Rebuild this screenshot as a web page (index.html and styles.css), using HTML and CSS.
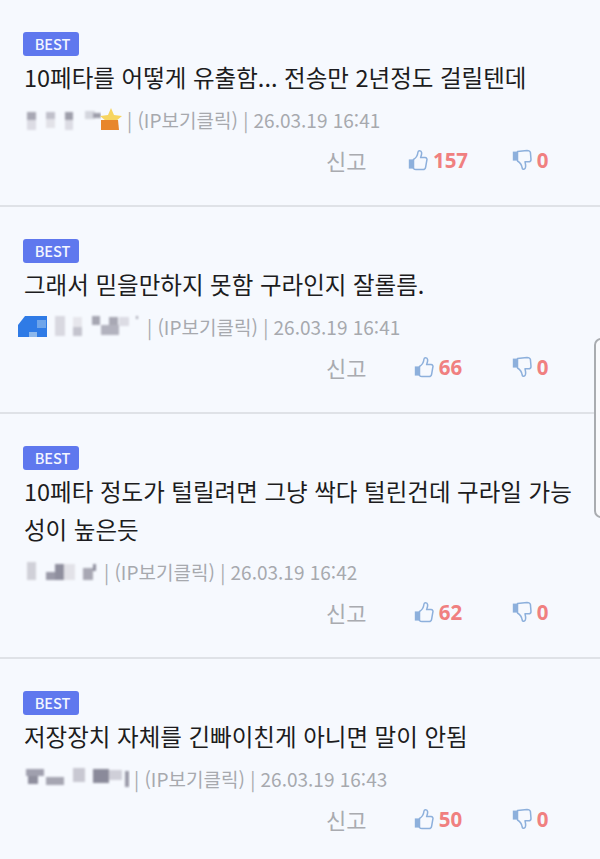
FILE: index.html
```html
<!DOCTYPE html>
<html lang="ko">
<head>
  <meta charset="UTF-8">
  <title>댓글</title>
  <link rel="stylesheet" href="styles.css">
</head>
<body>
  <svg class="defs" width="0" height="0">
    <defs>
      <filter id="pixelBlur"><feGaussianBlur stdDeviation="0.8"/></filter>
      <symbol id="thumbUp" viewBox="0 0 20 22">
        <path class="thumb-line" d="M5.5 10.5 C8 9 9.6 6.5 10 3 C10.2 1.4 13.2 1 13.6 3.6 C13.9 5.6 13 7.2 12.6 8.6 L17 8.6 C18.8 8.6 19.3 10.2 18.8 11.4 L17.6 18.4 C17.3 20 16.2 20.6 15 20.6 L8 20.6 C6.8 20.6 6 20 5.5 19.4 Z"/>
        <path class="thumb-fill" d="M0.8 10.4 H5.5 V19.6 H0.8 Z"/>
      </symbol>
      <symbol id="thumbDown" viewBox="0 0 20 22">
        <path class="thumb-line" d="M5.5 2.4 L15 1.4 C16.6 1.4 18 2 18.4 3.4 L19 10.4 C19 12 18 12.8 16.6 12.8 L13 12.8 C13.4 14.4 13.8 16 13.6 18 C13.3 20.6 10.6 21 10.2 19 C9.8 16 8.2 13.6 5.5 12 Z"/>
        <path class="thumb-fill" d="M0.8 2.6 H5.5 V11.6 H0.8 Z"/>
      </symbol>
    </defs>
  </svg>

  <div class="comment">
    <span class="badge">BEST</span>
    <p class="text">10페타를 어떻게 유출함... 전송만 2년정도 걸릴텐데</p>
    <div class="meta">
      <svg class="nick" width="78" height="26" viewBox="0 0 78 26">
        <g filter="url(#pixelBlur)">
          <rect x="4" y="6" width="9" height="8" fill="#a8a8b4"/>
          <rect x="4" y="14" width="9" height="10" fill="#dcdce4"/>
          <rect x="23" y="6" width="9" height="7" fill="#c0c0ca"/>
          <rect x="23" y="13" width="9" height="9" fill="#e2e2e8"/>
          <rect x="42" y="6" width="8" height="8" fill="#9e9eaa"/>
          <rect x="42" y="14" width="8" height="10" fill="#dcdce4"/>
          <rect x="62" y="5" width="10" height="8" fill="#d4d6de"/>
          <rect x="70" y="7" width="8" height="5" fill="#9e9eaa"/>
        </g>
      </svg>
      <svg class="level" width="24" height="24" viewBox="0 0 24 24">
        <path d="M12 1 L15 8 L23 9 L17 14 L19 21 L12 17 L5 21 L7 14 L1 9 L9 8 Z" fill="#f7d560"/>
        <path d="M2 13 L19 13 L20 23 L2 23 Z" fill="#e8862c"/>
      </svg>
      <span class="info">| (IP보기클릭) | 26.03.19 16:41</span>
    </div>
    <div class="actions">
      <span class="report">신고</span>
      <span class="vote up"><svg class="thumb"><use href="#thumbUp"/></svg>157</span>
      <span class="vote down"><svg class="thumb"><use href="#thumbDown"/></svg>0</span>
    </div>
  </div>

  <div class="comment">
    <span class="badge">BEST</span>
    <p class="text">그래서 믿을만하지 못함 구라인지 잘롤름.</p>
    <div class="meta meta-icon">
      <svg class="level" width="32" height="26" viewBox="0 0 32 26">
        <path d="M1 12 L8 3 H30 V24 H1 Z" fill="#2f7be6"/>
        <rect x="12" y="19" width="8" height="5" fill="#8db8ec"/>
        <rect x="20" y="7" width="9" height="8" fill="#6fa5ea"/>
      </svg>
      <svg class="nick" width="90" height="26" viewBox="0 0 90 26">
        <g filter="url(#pixelBlur)">
          <rect x="2" y="3" width="10" height="20" fill="#d8d8e0"/>
          <rect x="20" y="4" width="9" height="10" fill="#e6e6ec"/>
          <rect x="20" y="14" width="9" height="9" fill="#c4c4ce"/>
          <rect x="39" y="3" width="8" height="9" fill="#a6a6b2"/>
          <rect x="48" y="12" width="18" height="10" fill="#b2b2be"/>
          <rect x="56" y="4" width="9" height="8" fill="#a8a8b4"/>
          <rect x="66" y="4" width="10" height="9" fill="#dcdce4"/>
          <rect x="83" y="3" width="2" height="3" fill="#a8a8b4"/>
        </g>
      </svg>
      <span class="info">| (IP보기클릭) | 26.03.19 16:41</span>
    </div>
    <div class="actions">
      <span class="report">신고</span>
      <span class="vote up"><svg class="thumb"><use href="#thumbUp"/></svg>66</span>
      <span class="vote down"><svg class="thumb"><use href="#thumbDown"/></svg>0</span>
    </div>
  </div>

  <div class="comment">
    <span class="badge">BEST</span>
    <p class="text">10페타 정도가 털릴려면 그냥 싹다 털린건데 구라일 가능성이 높은듯</p>
    <div class="meta">
      <svg class="nick" width="77" height="26" viewBox="0 0 77 26">
        <g filter="url(#pixelBlur)">
          <rect x="4" y="4" width="9" height="18" fill="#d0d0d8"/>
          <rect x="23" y="14" width="10" height="8" fill="#9a9aa8"/>
          <rect x="32" y="6" width="9" height="16" fill="#8f8f9e"/>
          <rect x="41" y="6" width="11" height="16" fill="#e2e2e8"/>
          <rect x="60" y="10" width="10" height="12" fill="#a8a8b4"/>
          <rect x="70" y="6" width="3" height="7" fill="#8f8f9e"/>
        </g>
      </svg>
      <span class="info">| (IP보기클릭) | 26.03.19 16:42</span>
    </div>
    <div class="actions">
      <span class="report">신고</span>
      <span class="vote up"><svg class="thumb"><use href="#thumbUp"/></svg>62</span>
      <span class="vote down"><svg class="thumb"><use href="#thumbDown"/></svg>0</span>
    </div>
  </div>

  <div class="comment">
    <span class="badge">BEST</span>
    <p class="text">저장장치 자체를 긴빠이친게 아니면 말이 안됨</p>
    <div class="meta">
      <svg class="nick" width="107" height="26" viewBox="0 0 107 26">
        <g filter="url(#pixelBlur)">
          <rect x="3" y="4" width="18" height="7" fill="#a0a0ae"/>
          <rect x="5" y="11" width="10" height="8" fill="#8f8f9e"/>
          <rect x="23" y="12" width="18" height="8" fill="#a6a6b2"/>
          <rect x="50" y="3" width="12" height="14" fill="#c8c8d2"/>
          <rect x="70" y="4" width="16" height="14" fill="#8a8a9a"/>
          <rect x="86" y="5" width="13" height="10" fill="#cfcfd8"/>
          <rect x="102" y="6" width="4" height="16" fill="#9a9aa8"/>
        </g>
      </svg>
      <span class="info">| (IP보기클릭) | 26.03.19 16:43</span>
    </div>
    <div class="actions">
      <span class="report">신고</span>
      <span class="vote up"><svg class="thumb"><use href="#thumbUp"/></svg>50</span>
      <span class="vote down"><svg class="thumb"><use href="#thumbDown"/></svg>0</span>
    </div>
  </div>

  <div class="side-handle"></div>
</body>
</html>
```

FILE: styles.css
```css
html, body {
  height: 859px;
  overflow: hidden;
}

body {
  margin: 0;
  background: #f6f9fe;
  color: #1c1c20;
  font-family: 'Noto Sans CJK KR', 'Noto Sans', sans-serif;
  position: relative;
}

.defs {
  position: absolute;
}

.comment {
  padding: 32px 24px 0 23px;
  height: 173px;
  border-bottom: 2px solid #dfe2e7;
}

.comment:nth-of-type(3) {
  height: 211px;
}

.comment:last-of-type {
  border-bottom: none;
}

.badge {
  display: block;
  width: 53px;
  height: 24px;
  padding-left: 3px;
  line-height: 24px;
  text-align: center;
  background: #5f78ee;
  color: #f4f6ff;
  border-radius: 3px;
  font-size: 14.5px;
  font-weight: 500;
}

.text {
  margin: 2px 0 0 1px;
  font-size: 23.5px;
  line-height: 38px;
}

.meta {
  display: flex;
  align-items: center;
  height: 26px;
  margin-top: 10px;
  color: #a7a9ae;
  font-size: 19px;
}

.nick {
  display: block;
}

.level {
  display: block;
  margin-left: -2px;
}

.meta-icon .level {
  margin: 0 4px 0 -6px;
}

.info {
  margin-left: 4px;
  white-space: pre;
}

.actions {
  display: grid;
  grid-template-columns: 40px 144px 40px;
  align-items: center;
  height: 30px;
  margin-top: 12px;
  padding-left: 303px;
  font-size: 20.5px;
}

.report {
  color: #a9abb0;
  font-size: 22px;
  white-space: nowrap;
}

.vote {
  display: flex;
  align-items: center;
  justify-content: center;
  gap: 5px;
  color: #f08080;
  font-weight: 700;
  font-family: 'Noto Sans', sans-serif;
}

.thumb {
  width: 20px;
  height: 22px;
}

.thumb-line {
  fill: none;
  stroke: #8db0dc;
  stroke-width: 1.5;
  stroke-linejoin: round;
}

.thumb-fill {
  fill: #8db0dc;
}

/* tab at the right edge of the screen */
.side-handle {
  position: absolute;
  top: 338px;
  right: -8px;
  width: 10px;
  height: 176px;
  border: 2px solid #a9acb0;
  border-radius: 8px;
  background: #f9fafc;
}
```
